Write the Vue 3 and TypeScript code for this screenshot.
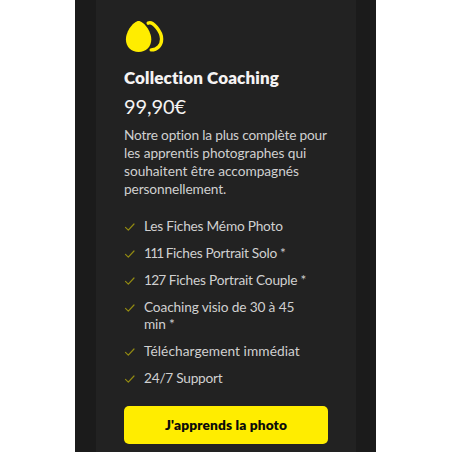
<script setup lang="ts">
interface Feature { count?: string; lines: string[]; cls: string }
const description: { text: string; cls: string }[] = [
  { text: 'Notre option la plus complète pour', cls: 'd1' },
  { text: 'les apprentis photographes qui', cls: 'd2' },
  { text: 'souhaitent être accompagnés', cls: 'd3' },
  { text: 'personnellement.', cls: 'd4' },
]
const features: Feature[] = [
  { lines: ['Les Fiches Mémo Photo'], cls: 'f1' },
  { count: '111', lines: [' Fiches Portrait Solo *'], cls: 'f2' },
  { count: '127', lines: [' Fiches Portrait Couple *'], cls: 'f3' },
  { lines: ['Coaching visio de 30 à 45', 'min *'], cls: 'f4' },
  { lines: ['Téléchargement immédiat'], cls: 'f5' },
  { lines: ['24/7 Support'], cls: 'f6' },
]
</script>

<template>
  <main class="page">
    <section class="card">
      <svg class="logo" viewBox="0 0 40 34" aria-hidden="true">
        <path d="M14.6 .9C10 .9 1.9 10.8 1.9 19.2C1.9 26.8 7.3 32 14.6 32S27.3 26.8 27.3 19.2C27.3 10.8 19.2 .9 14.6 .9Z" fill="#ffed00" />
        <path d="M24.3 3.1C28.7 .8 37.6 11.6 37.6 19C37.6 25.2 33.4 29.8 27.2 29.9" fill="none" stroke="#ffed00" stroke-width="3.4" stroke-linecap="round" />
      </svg>
      <h2 class="title">Collection Coaching</h2>
      <div class="price">99,90€</div>
      <p class="description">
        <span v-for="d in description" :key="d.cls" :class="d.cls">{{ d.text }}</span>
      </p>
      <ul class="features">
        <li v-for="f in features" :key="f.cls" :class="f.cls">
          <svg class="check" viewBox="0 0 12 10" aria-hidden="true">
            <path d="M1.5 5.4L4.3 8.1L10 2" />
          </svg>
          <div class="label">
            <span v-for="line in f.lines" :key="line"><span v-if="f.count" class="count">{{ f.count }}</span>{{ line }}</span>
          </div>
        </li>
      </ul>
      <button class="cta" type="button">J'apprends la photo</button>
    </section>
  </main>
</template>

<style>
body { background: #fff; }
</style>

<style scoped>
.page {
  box-sizing: border-box;
  width: 301px;
  height: 452px;
  margin-left: 75px;
  padding: 0 20px 0 21px;
  background: #1b1b1b;
  overflow: hidden;
  font-family: Lato, "Liberation Sans", sans-serif;
  font-variant-ligatures: none;
}
.card {
  box-sizing: border-box;
  height: 452px;
  padding: 20px 28px 0;
  background: #222;
  color: #d0d0d0;
}
.logo { display: block; width: 40px; height: 34px; }
.title {
  margin: 13px 0 0;
  font-size: 17px;
  line-height: 22px;
  font-weight: 800;
  letter-spacing: .13px;
  color: #f5f3f3;
  white-space: nowrap;
}
.price {
  margin-top: 4px;
  font-size: 20px;
  line-height: 26px;
  letter-spacing: -.1px;
  color: #f5f3f3;
}
.description {
  display: flex;
  flex-direction: column;
  align-items: flex-start;
  margin: 7px 0 0;
  font-size: 13.7px;
  line-height: 18px;
  white-space: nowrap;
}
.d1 { letter-spacing: -.19px; }
.d2 { letter-spacing: -.06px; }
.d3 { letter-spacing: -.03px; }
.d4 { letter-spacing: -.11px; }
.features {
  display: flex;
  flex-direction: column;
  gap: 9px;
  margin: 19px 0 0;
  padding: 0;
  list-style: none;
  font-size: 13.7px;
  line-height: 18px;
  white-space: nowrap;
}
.features li { display: flex; gap: 8px; }
.label { display: flex; flex-direction: column; align-items: flex-start; line-height: 18px; }
.check { width: 12px; height: 10px; margin-top: 5px; }
.check path { fill: none; stroke: #928a12; stroke-width: 1.2; stroke-linecap: round; stroke-linejoin: round; }
.f1 { letter-spacing: -.22px; }
.f2 { letter-spacing: -.28px; }
.f3 { letter-spacing: -.21px; }
.f4 { letter-spacing: -.14px; }
.f5 { letter-spacing: .07px; }
.f6 { letter-spacing: -.25px; }
.f2 .count { letter-spacing: -1.8px; }
.f3 .count { letter-spacing: -.8px; }
.f4 .label { line-height: 17px; padding-bottom: .5px; }
.cta {
  display: flex;
  align-items: center;
  justify-content: center;
  width: 204px;
  height: 38px;
  margin: 19.5px 0 0;
  padding: 0;
  border: 0;
  border-radius: 5px;
  background: #ffed00;
  color: #0b0b0b;
  font: 800 13.7px/18px Lato, "Liberation Sans", sans-serif;
  letter-spacing: .14px;
  white-space: nowrap;
}
</style>
